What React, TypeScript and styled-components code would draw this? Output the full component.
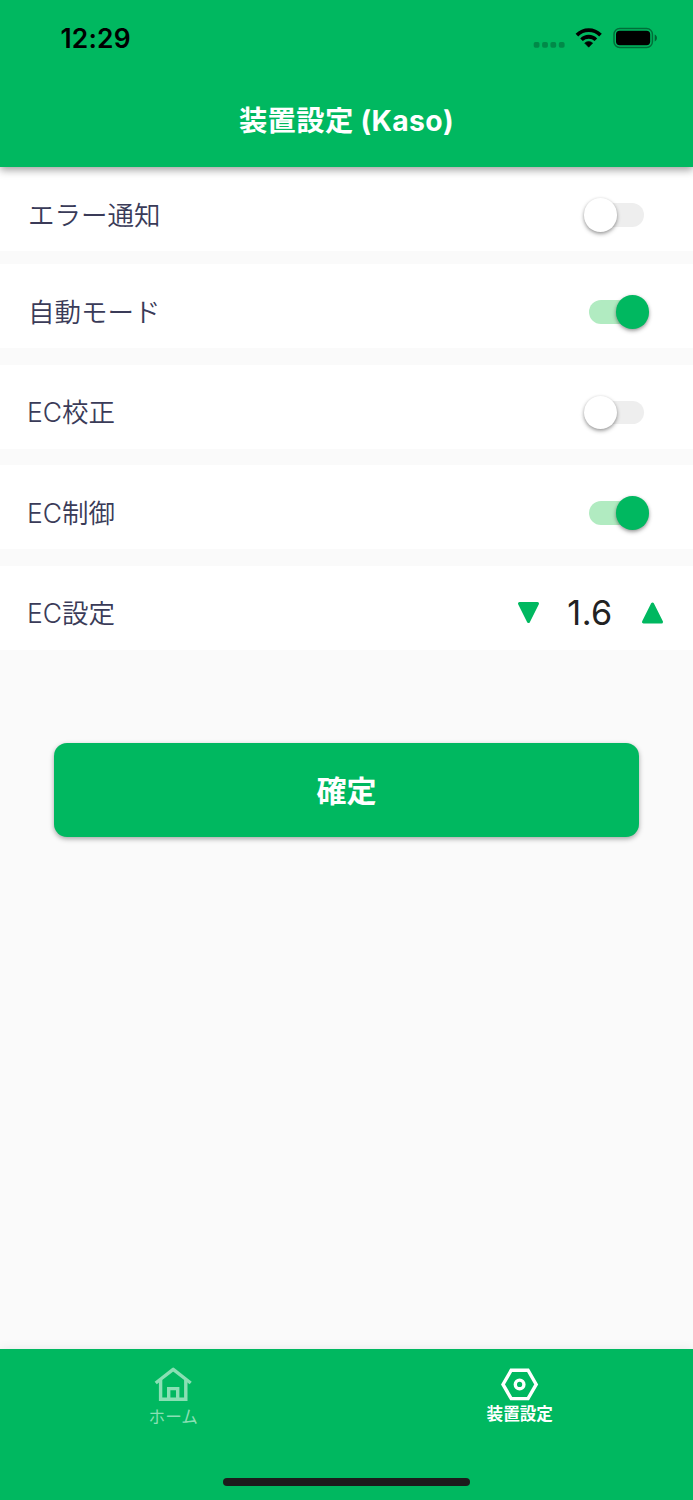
import React, { useState } from 'react';
import styled, { createGlobalStyle } from 'styled-components';

const GREEN = '#00b860';

const GlobalStyle = createGlobalStyle`
  * { box-sizing: border-box; }
  body {
    margin: 0;
    background: #fafafa;
    font-family: Inter, 'Noto Sans CJK JP', sans-serif;
  }
  button { font-family: inherit; border: 0; padding: 0; background: none; cursor: pointer; }
  svg { display: block; }
`;

const Screen = styled.div`
  display: flex;
  flex-direction: column;
  width: 693px;
  height: 1500px;
  background: #fafafa;
  overflow: hidden;
`;

const Header = styled.header`
  position: relative;
  z-index: 1;
  flex: none;
  height: 167.4px;
  background: ${GREEN};
  box-shadow: 0 3px 8px rgba(0, 0, 0, 0.38);
`;

const StatusBar = styled.div`
  display: flex;
  align-items: center;
  justify-content: space-between;
  height: 76px;
  padding: 0 35px 0 60.5px;
`;

const Clock = styled.time`
  font-size: 26.4px;
  font-weight: 600;
  line-height: 32px;
  letter-spacing: 0.2px;
  color: #000;
`;

const StatusIcons = styled.div`
  display: flex;
  align-items: center;
`;

const Title = styled.h1`
  margin: 0;
  padding-top: 24px;
  font-size: 28.3px;
  font-weight: 700;
  line-height: 42px;
  letter-spacing: 0.35px;
  text-align: center;
  color: #fff;
`;

const Settings = styled.ul`
  flex: none;
  margin: 0;
  padding: 0;
  list-style: none;
`;

const Row = styled.li<{ $gap?: number }>`
  display: flex;
  align-items: center;
  justify-content: space-between;
  height: 84px;
  margin-top: ${({ $gap = 0 }) => $gap}px;
  padding: 11px 29.5px 0 27px;
  background: #fff;
`;

const Label = styled.span<{ $kana?: boolean }>`
  padding-left: ${({ $kana }) => ($kana ? 1 : 0)}px;
  font-size: 26.5px;
  font-weight: 350;
  line-height: 40px;
  color: #3a3b58;
`;

const Track = styled.button<{ $on: boolean }>`
  display: flex;
  align-items: center;
  justify-content: ${({ $on }) => ($on ? 'flex-end' : 'flex-start')};
  width: 55px;
  height: 23.5px;
  margin-right: 19.5px;
  border-radius: 12px;
  background: ${({ $on }) => ($on ? '#b1ebc1' : '#eeeeee')};
`;

const Thumb = styled.span<{ $on: boolean }>`
  flex: none;
  width: 33.5px;
  height: 33.5px;
  margin: 0 -5.3px;
  border-radius: 50%;
  background: ${({ $on }) => ($on ? GREEN : '#fff')};
  box-shadow: 0 2px 4px rgba(0, 0, 0, 0.32), 0 1px 3px rgba(0, 0, 0, 0.14);
`;

const Stepper = styled.div`
  display: flex;
  align-items: center;
`;

const Value = styled.span`
  width: 101px;
  font-size: 34.2px;
  font-weight: 400;
  line-height: 42px;
  letter-spacing: 0.4px;
  text-align: center;
  color: #222;
`;

const Main = styled.main`
  flex: 1;
  padding: 93px 54px 0;
`;

const Confirm = styled.button`
  display: block;
  width: 585px;
  height: 94px;
  padding-top: 2px;
  border-radius: 13px;
  background: ${GREEN};
  box-shadow: 0 2px 5px rgba(0, 0, 0, 0.34);
  font-size: 30px;
  font-weight: 700;
  line-height: 44px;
  color: #fff;
`;

const TabBar = styled.nav`
  position: relative;
  flex: none;
  display: grid;
  grid-template-columns: 1fr 1fr;
  height: 151px;
  background: ${GREEN};
  box-shadow: 0 0 10px rgba(0, 0, 0, 0.08);
`;

const Tab = styled.button<{ $active?: boolean }>`
  display: flex;
  flex-direction: column;
  align-items: center;
  height: 90px;
  padding-top: 17px;
  gap: ${({ $active }) => ($active ? 1 : 4)}px;
  color: ${({ $active }) => ($active ? '#fff' : '#8adfb4')};
  font-size: 16.6px;
  font-weight: ${({ $active }) => ($active ? 700 : 400)};
  line-height: 22px;
`;

const HomeIndicator = styled.div`
  position: absolute;
  left: 223px;
  bottom: 14px;
  width: 247px;
  height: 8px;
  border-radius: 4px;
  background: #1c1c1c;
`;

function Toggle({ initial, label }: { initial: boolean; label: string }) {
  const [on, setOn] = useState(initial);
  return (
    <Track $on={on} role="switch" aria-checked={on} aria-label={label} onClick={() => setOn(!on)}>
      <Thumb $on={on} />
    </Track>
  );
}

const toggles = [
  { label: 'エラー通知', on: false, gap: 0, kana: true },
  { label: '自動モード', on: true, gap: 13, kana: true },
  { label: 'EC校正', on: false, gap: 16.5, kana: false },
  { label: 'EC制御', on: true, gap: 16.5, kana: false },
];

export default function App() {
  const [value, setValue] = useState(1.6);
  return (
    <Screen>
      <GlobalStyle />
      <Header>
        <StatusBar>
          <Clock>12:29</Clock>
          <StatusIcons>
            <svg width="126" height="30" viewBox="0 0 126 30">
              <g fill="#000" fillOpacity=".25">
                <rect x="1.7" y="19" width="5.8" height="5.8" rx="1.7" />
                <rect x="10.1" y="19" width="5.8" height="5.8" rx="1.7" />
                <rect x="18.4" y="19" width="5.8" height="5.8" rx="1.7" />
                <rect x="26.8" y="19" width="5.8" height="5.8" rx="1.7" />
              </g>
              <path d="M43.6 10.7 A18.5 18.5 0 0 1 69.8 10.7 L67.2 13.4 A14.9 14.9 0 0 0 46.2 13.4 Z" />
              <path d="M48.2 15.4 A12 12 0 0 1 65.2 15.4 L62.6 18.1 A8.3 8.3 0 0 0 50.8 18.1 Z" />
              <path d="M52.7 20.1 A5.8 5.8 0 0 1 60.7 20.1 L56.7 24.2 Z" stroke="#000" strokeWidth=".6" strokeLinejoin="round" />
              <rect x="82" y="5.6" width="38.4" height="18.8" rx="5.7" fill="none" stroke="#000" strokeOpacity=".4" strokeWidth="1.5" />
              <rect x="84" y="7.7" width="34.2" height="14.6" rx="3.7" />
              <path d="M122.7 11.6 C125.7 12.8 125.7 17.2 122.7 18.4 Z" fillOpacity=".45" />
            </svg>
          </StatusIcons>
        </StatusBar>
        <Title>装置設定 (Kaso)</Title>
      </Header>
      <Settings>
        {toggles.map((t) => (
          <Row key={t.label} $gap={t.gap}>
            <Label $kana={t.kana}>{t.label}</Label>
            <Toggle initial={t.on} label={t.label} />
          </Row>
        ))}
        <Row $gap={16.5}>
          <Label>EC設定</Label>
          <Stepper>
            <button aria-label="-" onClick={() => setValue(value - 0.1)}>
              <svg width="23" height="24" viewBox="0 0 23 24">
                <path d="M2.5 2.5H20.5L11.5 20.5Z" fill={GREEN} stroke={GREEN} strokeWidth="3" strokeLinejoin="round" />
              </svg>
            </button>
            <Value>{value.toFixed(1)}</Value>
            <button aria-label="+" onClick={() => setValue(value + 0.1)}>
              <svg width="23" height="24" viewBox="0 0 23 24">
                <path d="M2.5 21H20.5L11.5 3Z" fill={GREEN} stroke={GREEN} strokeWidth="3" strokeLinejoin="round" />
              </svg>
            </button>
          </Stepper>
        </Row>
      </Settings>
      <Main>
        <Confirm>確定</Confirm>
      </Main>
      <TabBar>
        <Tab>
          <svg width="38" height="36" viewBox="0 0 38 36" fill="none" stroke="currentColor" strokeWidth="3.4">
            <path d="M1.7 17 L19.2 3.3 L36.7 17" strokeLinejoin="round" />
            <path d="M6.6 14V33.3H31.8V14" />
            <path d="M14.7 33V22.6H23.7V33" />
          </svg>
          ホーム
        </Tab>
        <Tab $active>
          <svg width="38" height="36" viewBox="0 0 38 36" fill="none" stroke="currentColor" strokeWidth="3.4">
            <path d="M10.2 4.2H27L35.2 18.4L27 32.6H10.2L2 18.4Z" />
            <circle cx="18.6" cy="18.4" r="4.3" />
          </svg>
          装置設定
        </Tab>
        <HomeIndicator />
      </TabBar>
    </Screen>
  );
}
